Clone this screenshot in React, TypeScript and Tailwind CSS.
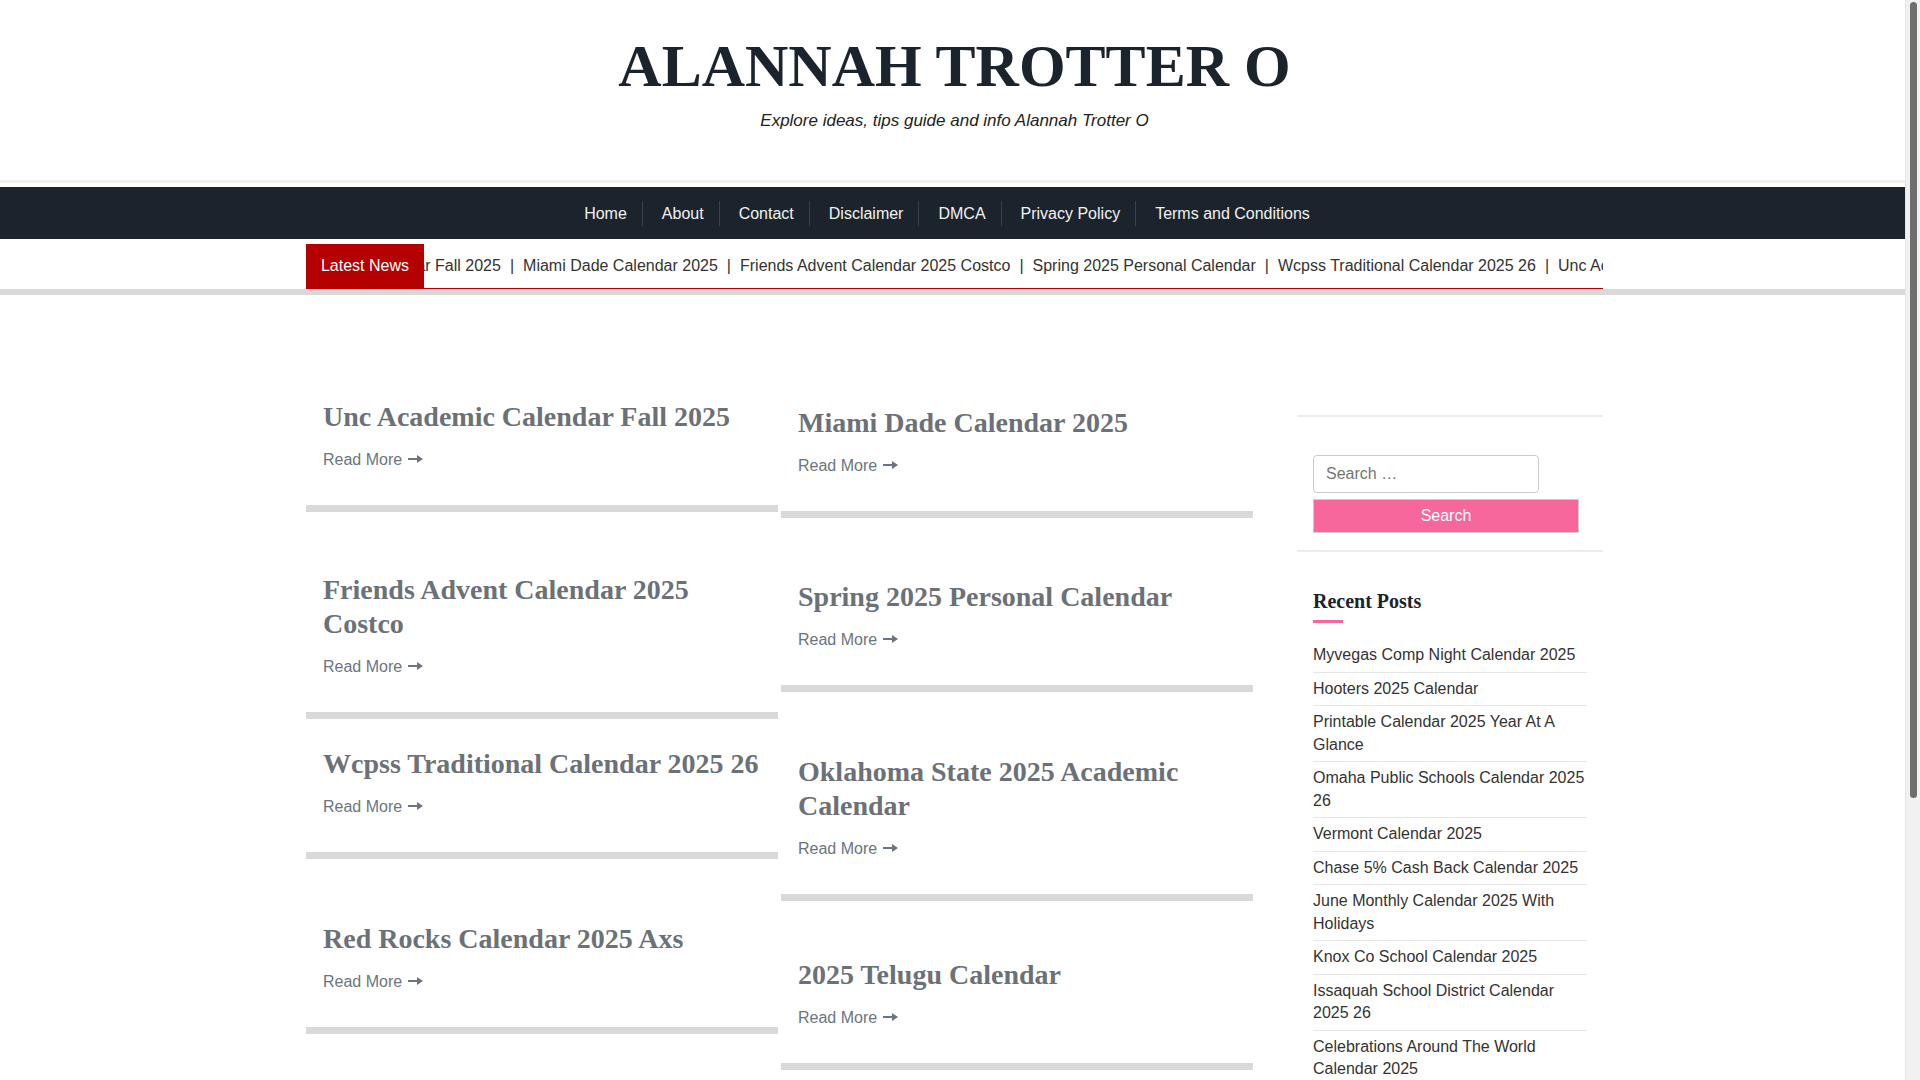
import React from 'react';

const tickerItems = [
    'Unc Academic Calendar Fall 2025',
    'Miami Dade Calendar 2025',
    'Friends Advent Calendar 2025 Costco',
    'Spring 2025 Personal Calendar',
    'Wcpss Traditional Calendar 2025 26',
];

const navItems = ['Home', 'About', 'Contact', 'Disclaimer', 'DMCA', 'Privacy Policy', 'Terms and Conditions'];

const recentPosts = [
    'Myvegas Comp Night Calendar 2025',
    'Hooters 2025 Calendar',
    'Printable Calendar 2025 Year At A Glance',
    'Omaha Public Schools Calendar 2025 26',
    'Vermont Calendar 2025',
    'Chase 5% Cash Back Calendar 2025',
    'June Monthly Calendar 2025 With Holidays',
    'Knox Co School Calendar 2025',
    'Issaquah School District Calendar 2025 26',
    'Celebrations Around The World Calendar 2025',
];

const leftPosts = [
    { title: 'Unc Academic Calendar Fall 2025', gap: 'mt-0' },
    { title: 'Friends Advent Calendar 2025 Costco', gap: 'mt-[41px]' },
    { title: 'Wcpss Traditional Calendar 2025 26', gap: 'mt-[8px]' },
    { title: 'Red Rocks Calendar 2025 Axs', gap: 'mt-[43px]' },
];

const rightPosts = [
    { title: 'Miami Dade Calendar 2025', gap: 'mt-[6px]' },
    { title: 'Spring 2025 Personal Calendar', gap: 'mt-[42px]' },
    { title: 'Oklahoma State 2025 Academic Calendar', gap: 'mt-[43px]' },
    { title: '2025 Telugu Calendar', gap: 'mt-[37px]' },
];

const LongArrow = () => (
    <svg width="15" height="10" viewBox="0 0 15 10" className="inline-block ml-[6px] align-[1px]">
        <rect x="0" y="4" width="10" height="2" fill="currentColor" />
        <polygon points="9,1 15,5 9,9" fill="currentColor" />
    </svg>
);

const PostCard: React.FC<{ title: string; gap: string }> = ({ title, gap }) => (
    <div className={`${gap} pt-[20px] pb-[33px] px-[17px] border-b-[7px] border-[#d9d9d9]`}>
        <h2 className="font-['Liberation_Serif','Times_New_Roman',serif] font-bold text-[28px] leading-[34px] text-[#6c7178]">
            {title}
        </h2>
        <div className="mt-[14px] text-[16px] leading-[24px] text-[#6c757d]">
            Read More
            <LongArrow />
        </div>
    </div>
);

export default function App() {
    return (
        <div className="w-[1905px] min-h-[1460px] bg-white font-['Liberation_Sans',Arial,sans-serif]">
            {/* header */}
            <header className="pt-[36px] text-center">
                <h1 className="font-['Liberation_Serif','Times_New_Roman',serif] font-bold text-[60px] leading-[60px] text-[#1b232c] pl-[4px]">
                    ALANNAH TROTTER O
                </h1>
                <p className="mt-[13px] italic text-[17px] leading-[24px] text-[#222] pl-[4px]">
                    Explore ideas, tips guide and info Alannah Trotter O
                </p>
            </header>
            <div className="mt-[47px] h-[3px] bg-[#f4f0e9]" />

            {/* nav */}
            <nav className="mt-[4px] h-[52px] bg-[#1b232c]">
                <ul className="w-[1301px] pl-[4px] mx-auto h-full flex items-center justify-center">
                    {navItems.map((item, i) => (
                        <li
                            key={item}
                            className={`pr-[15px] text-[16px] leading-[25px] text-[#f2f2f2] ${i > 0 ? 'pl-[19px] border-l border-[#39424b]' : ''}`}
                        >
                            {item}
                        </li>
                    ))}
                </ul>
            </nav>

            {/* latest news ticker */}
            <div className="w-[1301px] pl-[4px] mx-auto mt-[5px]">
                <div className="flex h-[45px] border-b border-[#b40000]">
                    <div className="relative z-10 w-[118px] shrink-0 bg-[#b40000] text-white text-[16px] flex items-center justify-center">
                        Latest News
                    </div>
                    <div className="flex-1 overflow-hidden flex items-center">
                        <div className="whitespace-nowrap -ml-[165px] text-[16px] text-[#333]">
                            {[...tickerItems, ...tickerItems].map((t, i) => (
                                <React.Fragment key={i}>
                                    <span>{t}</span>
                                    <span className="px-[9px]">|</span>
                                </React.Fragment>
                            ))}
                        </div>
                    </div>
                </div>
            </div>
            <div className="h-[6px] bg-[#d9d9d9]" />

            {/* content */}
            <main className="w-[1301px] pl-[4px] mx-auto mt-[85px] flex items-start">
                <div className="w-[947px] flex items-start gap-[3px]">
                    <div className="w-[472px]">
                        {leftPosts.map((p) => (
                            <PostCard key={p.title} title={p.title} gap={p.gap} />
                        ))}
                    </div>
                    <div className="w-[472px]">
                        {rightPosts.map((p) => (
                            <PostCard key={p.title} title={p.title} gap={p.gap} />
                        ))}
                    </div>
                </div>

                <aside className="ml-[44px] w-[306px] mt-[35px]">
                    <div className="border-y-2 border-[#ececec] pt-[38px] pb-[17px] px-[16px]">
                        <input
                            type="text"
                            placeholder="Search …"
                            className="block w-[226px] h-[38px] border border-[#ccc] rounded-[4px] px-[12px] text-[16px] text-[#333] placeholder:text-[#757575] outline-none"
                        />
                        <button className="block mt-[6px] w-[266px] h-[34px] bg-[#f8679b] border border-[#ccc] text-white text-[16px]">
                            Search
                        </button>
                    </div>

                    <div className="px-[16px] pt-[35px]">
                        <h3 className="font-['Liberation_Serif','Times_New_Roman',serif] font-bold text-[20px] leading-[28px] text-[#1b232c]">
                            Recent Posts
                        </h3>
                        <div className="mt-[5px] h-[3px] w-[30px] bg-[#f8679b]" />
                        <ul className="mt-[16px]">
                            {recentPosts.map((p) => (
                                <li key={p} className="py-[5px] border-b border-[#e6e6e6] text-[16px] leading-[22.5px] text-[#333]">
                                    {p}
                                </li>
                            ))}
                        </ul>
                    </div>
                </aside>
            </main>

            {/* browser scrollbar */}
            <div className="fixed top-0 right-0 w-[15px] h-[1080px] bg-[#f1f1f1] border-l border-[#e6e6e6]">
                <div className="absolute top-[2px] left-[4px] w-[7px] h-[796px] rounded-full bg-[#6e6e6e]" />
            </div>
        </div>
    );
}
